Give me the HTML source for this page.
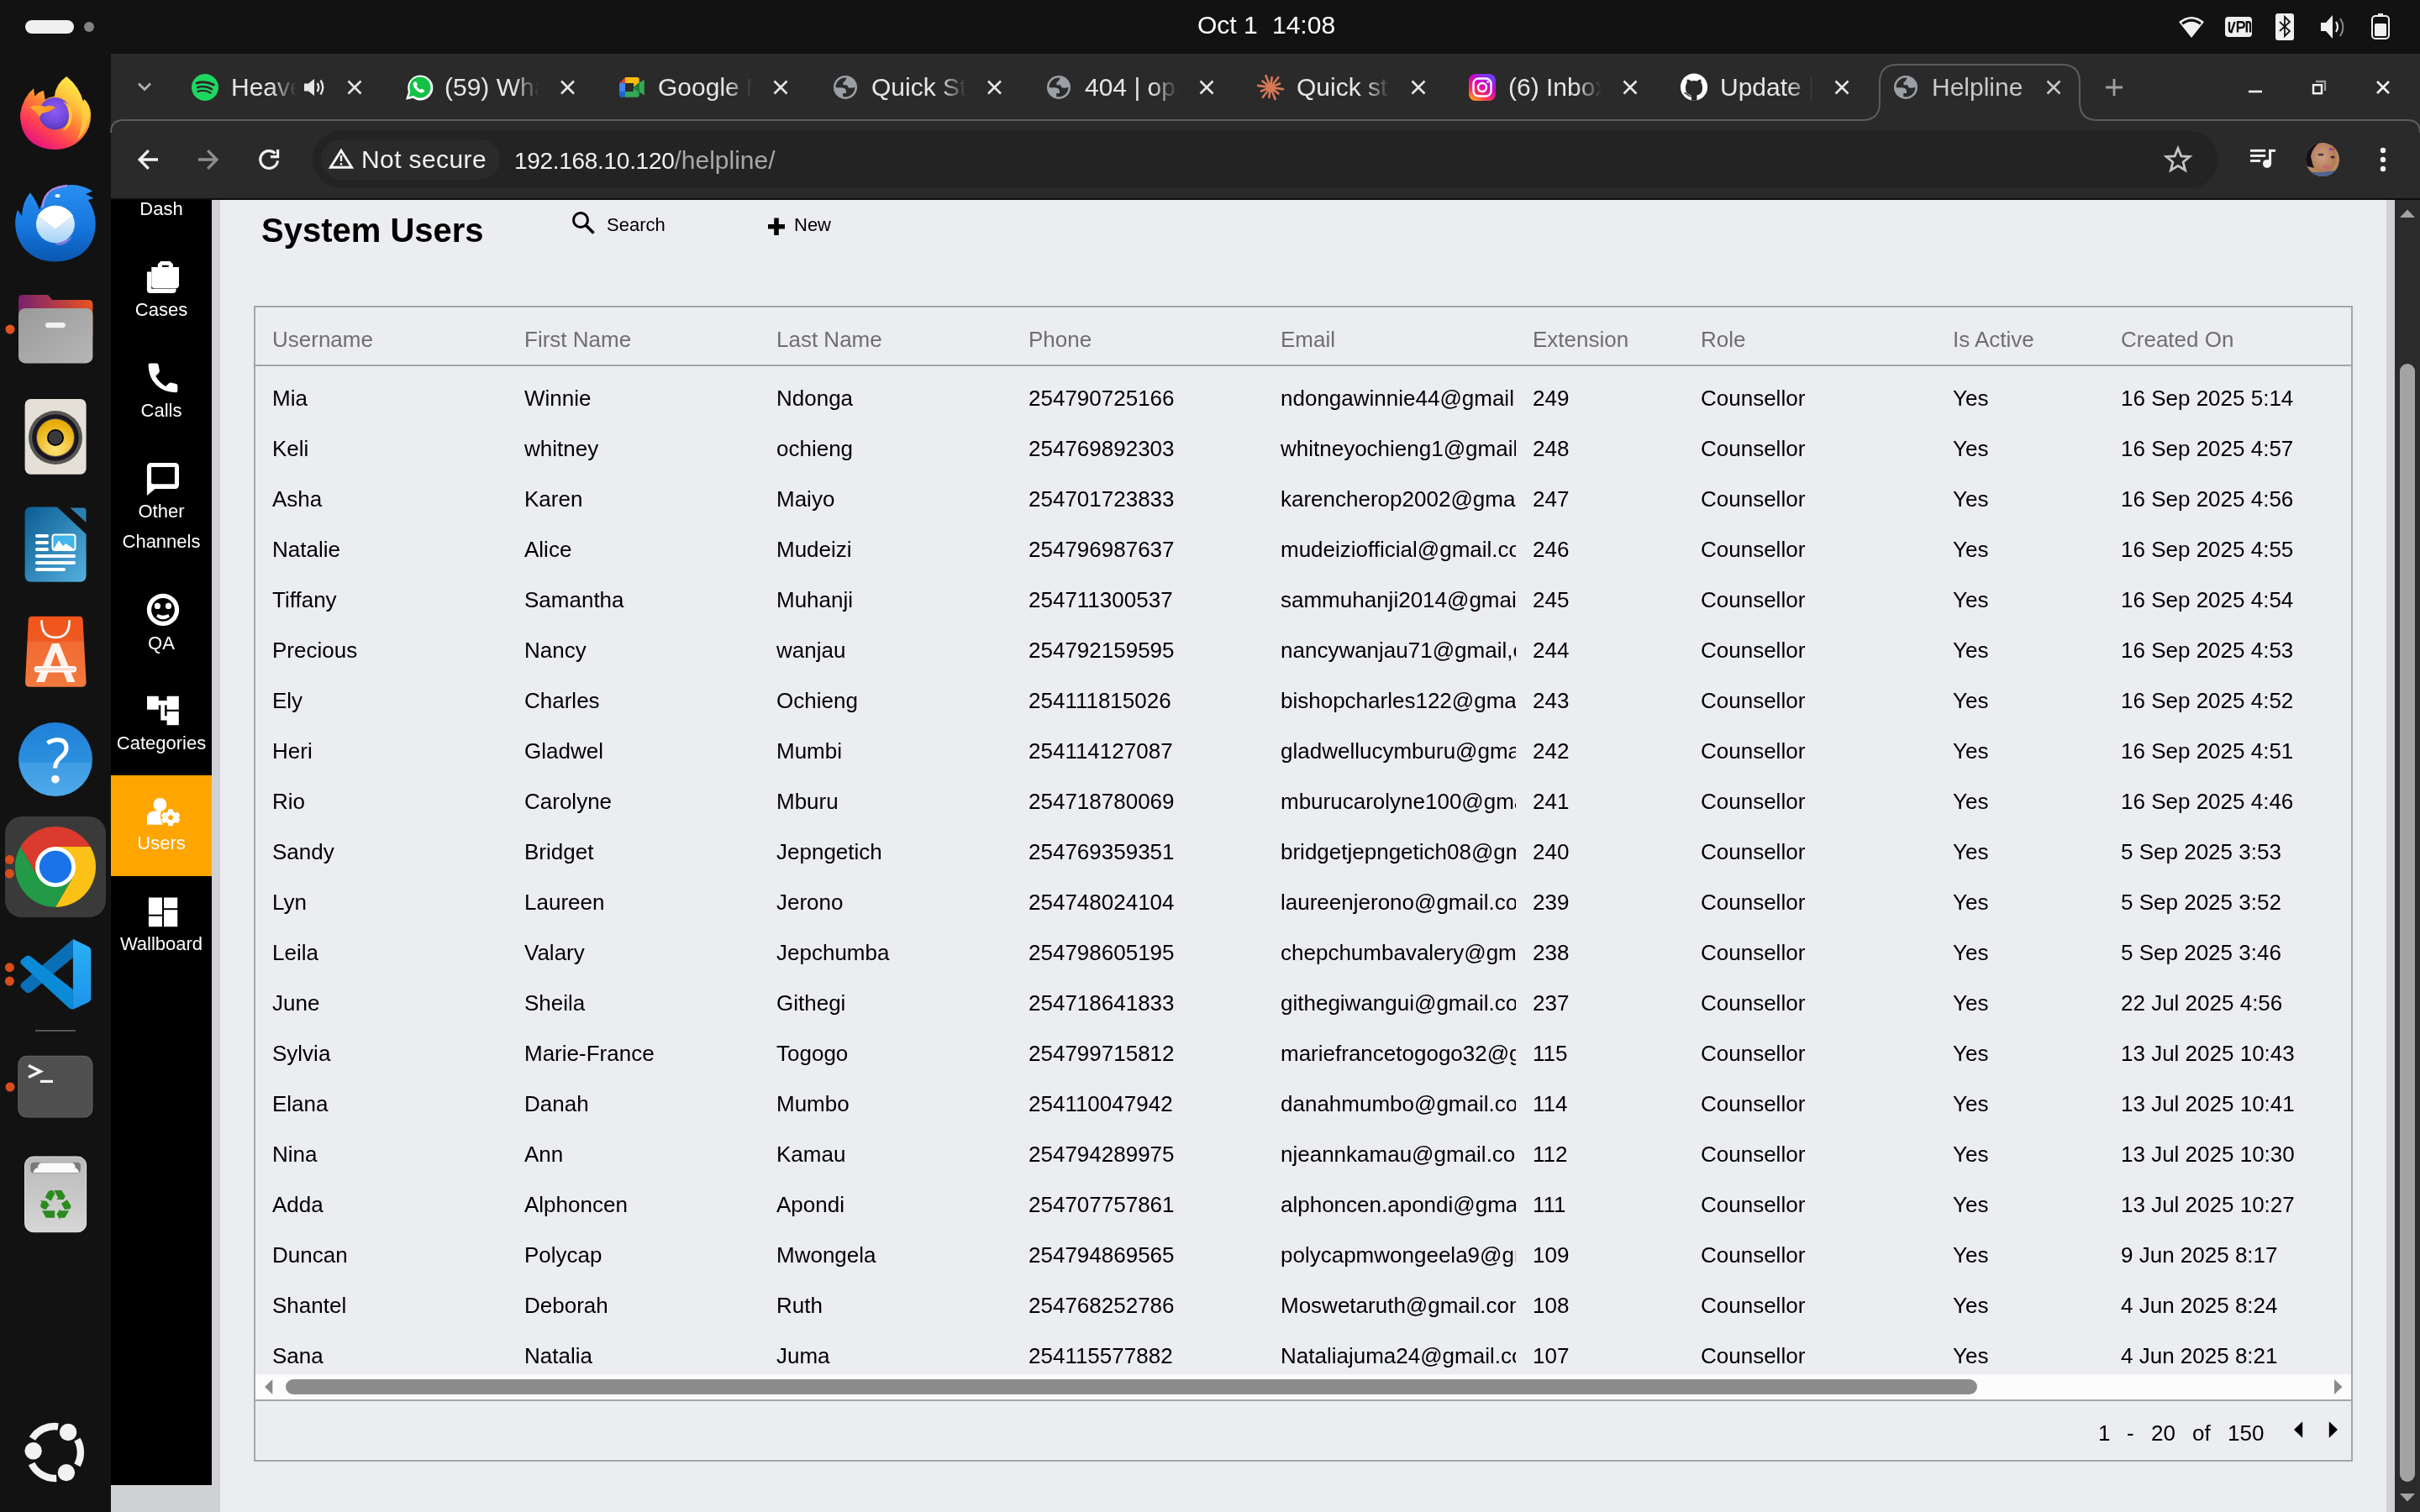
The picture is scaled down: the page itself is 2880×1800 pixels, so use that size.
<!DOCTYPE html>
<html><head><meta charset="utf-8">
<style>
html,body{margin:0;padding:0;width:2880px;height:1800px;overflow:hidden;background:#121212;}
body{font-family:"Liberation Sans",sans-serif;position:relative;}
.a{position:absolute;}
.t{position:absolute;white-space:nowrap;line-height:1;will-change:transform;}
svg{position:absolute;overflow:visible;}
.th{position:absolute;white-space:nowrap;overflow:hidden;font-size:26px;line-height:30px;height:30px;color:#6f6f6f;padding-left:20px;margin-top:23px;will-change:transform;}
.td{position:absolute;white-space:nowrap;overflow:hidden;font-size:26px;line-height:30px;height:30px;color:#000;padding-left:20px;margin-top:23px;will-change:transform;}
.tab{position:absolute;top:86px;font-size:30px;line-height:36px;height:36px;color:#e3e3e3;white-space:nowrap;overflow:hidden;will-change:transform;}
</style></head>
<body>
<!-- ============ TOP BAR ============ -->
<div class="a" style="left:0;top:0;width:2880px;height:64px;background:#121212"></div>
<div class="a" style="left:30px;top:24px;width:58px;height:16px;border-radius:8px;background:#f0f0f0"></div>
<div class="a" style="left:100px;top:26px;width:12px;height:12px;border-radius:6px;background:#828282"></div>
<div class="t" style="left:1425px;top:15px;font-size:30px;color:#fff">Oct 1</div><div class="t" style="left:1514px;top:15px;font-size:30px;color:#fff">14:08</div>
<!-- tray -->
<svg style="left:0;top:0" width="2880" height="64">
  <!-- wifi -->
  <path d="M2593,26 Q2608,14 2623,26 L2608,45 Z" fill="#f0f0f0"/>
  <path d="M2596.3,27 Q2608,17.8 2619.7,27 L2618.2,29.6 Q2608,21.8 2597.8,29.6 Z" fill="#121212"/>
  <!-- vpn -->
  <rect x="2648" y="20" width="32" height="24" rx="4" fill="#f0f0f0"/>
  <path d="M2653,26 V34.5 Q2653,38.2 2655.5,38.2 L2659.5,26 M2663,38.5 V26.2 H2667.5 Q2670.8,26.2 2670.8,29.6 Q2670.8,33 2667.5,33 H2663 M2673.8,38.5 V26.2 H2676 Q2678,26.2 2678,28.6 V38.5" stroke="#121212" stroke-width="2.4" fill="none"/>
  <!-- bluetooth -->
  <rect x="2708" y="16" width="22" height="32" rx="3" fill="#f0f0f0"/>
  <path d="M2713,26 L2725,37 L2719,43 V20 L2725,26 L2713,37" stroke="#121212" stroke-width="1.8" fill="none"/>
  <!-- volume -->
  <path d="M2762,27 H2768 L2776,18 V46 L2768,37 H2762 Z" fill="#f0f0f0"/>
  <path d="M2780,26 Q2784,32 2780,38" stroke="#f0f0f0" stroke-width="2.2" fill="none"/>
  <path d="M2785,22 Q2792,32 2785,43" stroke="#8a8a8a" stroke-width="2" fill="none"/>
  <!-- battery -->
  <rect x="2830" y="16" width="6" height="3" fill="#f0f0f0"/>
  <rect x="2823" y="19" width="20" height="27" rx="4" stroke="#f0f0f0" stroke-width="2" fill="none"/>
  <rect x="2826" y="28" width="14" height="15" rx="1.5" fill="#f0f0f0"/>
</svg>

<!-- ============ DOCK ============ -->
<svg style="left:0;top:0" width="132" height="1800">
<defs>
  <radialGradient id="ffg" cx="0.7" cy="0.2" r="0.9">
    <stop offset="0" stop-color="#fff44f"/><stop offset="0.35" stop-color="#ffbd4f"/><stop offset="0.6" stop-color="#ff6a3a"/><stop offset="0.85" stop-color="#ff3750"/><stop offset="1" stop-color="#e31587"/>
  </radialGradient>
  <radialGradient id="ffp" cx="0.5" cy="0.35" r="0.7">
    <stop offset="0" stop-color="#9059ff"/><stop offset="0.6" stop-color="#6e4fd8"/><stop offset="1" stop-color="#5b3ab8"/>
  </radialGradient>
  <linearGradient id="tbg" x1="0" y1="0" x2="0" y2="1">
    <stop offset="0" stop-color="#1f8ae8"/><stop offset="1" stop-color="#0c5cb8"/>
  </linearGradient>
  <linearGradient id="fold" x1="0" y1="0" x2="1" y2="0">
    <stop offset="0" stop-color="#77216f"/><stop offset="1" stop-color="#e95420"/>
  </linearGradient>
  <linearGradient id="foldg" x1="0" y1="0" x2="1" y2="1">
    <stop offset="0" stop-color="#9a9a9a"/><stop offset="1" stop-color="#b6b6b6"/>
  </linearGradient>
  <radialGradient id="spk" cx="0.5" cy="0.8" r="0.7">
    <stop offset="0" stop-color="#fde47a"/><stop offset="1" stop-color="#e8ad0a"/>
  </radialGradient>
  <linearGradient id="wri" x1="0" y1="0" x2="1" y2="1">
    <stop offset="0" stop-color="#0b5d94"/><stop offset="1" stop-color="#55b0dd"/>
  </linearGradient>
  <linearGradient id="apc" x1="0" y1="0" x2="0" y2="1">
    <stop offset="0" stop-color="#f2541a"/><stop offset="0.35" stop-color="#ee5a22"/><stop offset="0.37" stop-color="#f26b34"/><stop offset="1" stop-color="#f27a3e"/>
  </linearGradient>
  <linearGradient id="hlp" x1="0" y1="0" x2="0" y2="1">
    <stop offset="0" stop-color="#2080d8"/><stop offset="0.54" stop-color="#2b90de"/><stop offset="0.54" stop-color="#3f9be3"/><stop offset="1" stop-color="#4eaae9"/>
  </linearGradient>
  <linearGradient id="trs" x1="0" y1="0" x2="0" y2="1">
    <stop offset="0" stop-color="#b9b9b9"/><stop offset="1" stop-color="#d6d6d6"/>
  </linearGradient>
  <linearGradient id="vsl" x1="0" y1="0" x2="0" y2="1">
    <stop offset="0" stop-color="#2bb0f5"/><stop offset="1" stop-color="#1c94ea"/>
  </linearGradient>
</defs>
<!-- firefox -->
<defs>
  <linearGradient id="ffb" x1="0.85" y1="0.05" x2="0.25" y2="0.95">
    <stop offset="0" stop-color="#fff44f"/><stop offset="0.3" stop-color="#ffc23a"/><stop offset="0.55" stop-color="#ff7a35"/><stop offset="0.78" stop-color="#ff3d55"/><stop offset="1" stop-color="#e5177f"/>
  </linearGradient>
  <radialGradient id="ffp2" cx="0.5" cy="0.4" r="0.65">
    <stop offset="0" stop-color="#8f5cf7"/><stop offset="0.6" stop-color="#7048dc"/><stop offset="1" stop-color="#5636b4"/>
  </radialGradient>
  <linearGradient id="ffh" x1="0" y1="0" x2="1" y2="0.3">
    <stop offset="0" stop-color="#ffb52e"/><stop offset="1" stop-color="#ff9124"/>
  </linearGradient>
</defs>
<path d="M40,105.2 Q27,116 24,136 Q24,160 40,171 Q52,178.5 66.3,178 Q86,177.5 98,164 Q108.5,152 108.1,136 Q107.5,125 100.4,118 L99,121 Q95,104 79.3,91 Q66,100 64.8,114.8 Q59,115.5 53.7,118.5 L51.9,107.8 Q45,110 41.5,114.8 Z" fill="url(#ffb)"/>
<path d="M96,116 Q104,124 106,138 Q104,156 92,166 Q99,150 97,132 Z" fill="#ffd340" opacity="0.7"/>
<circle cx="65.5" cy="135.2" r="19.2" fill="url(#ffp2)"/>
<path d="M75,121 Q86,124 86,138 Q85,152 74,156.5 Q83,146 82,136 Q81,126 75,121 Z" fill="#ffc33a"/>
<path d="M35.2,127.4 Q44,124 54,127 Q60,124 66,128.1 Q60,133 53,134 Q48,135 47.5,140 Q44,133 35.2,127.4 Z" fill="url(#ffh)"/>
<!-- thunderbird -->
<defs>
  <linearGradient id="tb2" x1="0" y1="0" x2="0" y2="1">
    <stop offset="0" stop-color="#2a8ef0"/><stop offset="0.55" stop-color="#1677de"/><stop offset="1" stop-color="#0b56b0"/>
  </linearGradient>
  <linearGradient id="env" x1="0" y1="0" x2="0" y2="1">
    <stop offset="0" stop-color="#ffffff"/><stop offset="1" stop-color="#a6d2f7"/>
  </linearGradient>
</defs>
<path d="M35.9,229.3 Q44,240 47,250 Q52,232 68,224 Q80,218.5 92,220.5 Q104,223 110,227.8 L102,231 L111.5,236 L105,238 Q113.7,252 113.7,266 Q113.7,290 96,303 Q82,311.5 66,311.5 Q42,311.5 28,295 Q18,282 18.1,265 Q18.5,255 21.1,250 L26,257 Q27,240 35.9,229.3 Z" fill="url(#tb2)"/>
<path d="M50.4,247 Q52,232 62,226 Q70,222 80,221" stroke="#a78be8" stroke-width="2.6" fill="none"/>
<path d="M60,283 Q72,290 86,282 Q80,292 68,292 Z" fill="#7c7ce0"/>
<ellipse cx="65.9" cy="267" rx="23" ry="22.2" fill="url(#env)"/>
<path d="M44.8,257 L65.9,273 L87,257 Q80,245.5 65.9,244.8 Q52,245.5 44.8,257 Z" fill="#ffffff"/>
<path d="M44.8,257 L65.9,273 L87,257" stroke="#c6def4" stroke-width="1" fill="none"/>
<ellipse cx="68.5" cy="233" rx="3" ry="2" fill="#fff"/>
<!-- files -->
<path d="M22,356 Q22,351 27,351 H57 L62,357 H105 Q110.4,357 110.4,362 V400 H22 Z" fill="url(#fold)"/>
<rect x="22" y="367" width="88.4" height="65.4" rx="8" fill="url(#foldg)"/>
<rect x="54" y="384" width="23.8" height="6.2" rx="3.1" fill="#f2f2f2"/>
<circle cx="12" cy="392" r="5.5" fill="#e4531e"/>
<!-- rhythmbox -->
<rect x="29.6" y="475" width="73" height="89.7" rx="7" fill="#e4e0d6"/>
<circle cx="66" cy="521" r="32" fill="#555"/>
<circle cx="66" cy="521" r="27.8" fill="#1b1620"/>
<circle cx="66" cy="521" r="23" fill="#4a4a50"/>
<circle cx="66" cy="521" r="22" fill="url(#spk)"/>
<circle cx="66" cy="521" r="10" fill="#000"/>
<circle cx="66" cy="521" r="8.3" fill="#3a3a3a"/>
<!-- writer -->
<path d="M37,603.5 H68 L102.6,636 V685 Q102.6,692.7 95,692.7 H37 Q29.6,692.7 29.6,685 V611 Q29.6,603.5 37,603.5 Z" fill="url(#wri)"/>
<path d="M83.5,604.5 H99 Q102.5,604.5 102.5,608 V622 Z" fill="#2b7fb0"/>
<rect x="42" y="636" width="16" height="4" rx="2" fill="#fff"/>
<rect x="42" y="644" width="16" height="4" rx="2" fill="#fff"/>
<rect x="42" y="652" width="16" height="4" rx="2" fill="#fff"/>
<rect x="42" y="660" width="48" height="4" rx="2" fill="#fff"/>
<rect x="42" y="668" width="48" height="4" rx="2" fill="#fff"/>
<rect x="42" y="676" width="36" height="4" rx="2" fill="#fff"/>
<rect x="62.5" y="636.5" width="27" height="18.5" rx="3" fill="#43b4ec" stroke="#fff" stroke-width="2"/>
<path d="M63.5,654 L70,643.5 L75,650 L78.5,647 L88.5,654 Z" fill="#fff"/>
<!-- app center -->
<path d="M38,733.7 H94 Q98.5,733.7 98.6,738 L102.6,812 Q102.6,817.8 97,817.8 H35 Q30,817.8 30,812 L33.8,738 Q34,733.7 38,733.7 Z" fill="url(#apc)"/>
<path d="M49.6,739.5 Q49.6,758.9 66,758.9 Q82.6,758.9 82.6,739.5" stroke="#f2f2f2" stroke-width="2.8" fill="none" stroke-linecap="round"/>
<path d="M62,766 H70.5 L89.3,812 H80 L66.3,776.3 L53,812 H43 Z" fill="#fdf3ec"/>
<rect x="40.7" y="793" width="50.4" height="7.4" rx="3.7" fill="#fff"/>
<rect x="43" y="795.2" width="46" height="3" rx="1.5" fill="#fbd6c8"/>
<!-- help -->
<circle cx="66" cy="904" r="44" fill="url(#hlp)"/>
<path d="M56.5,884.8 Q62,880.7 68.5,880.7 Q79,880.9 79,890.5 Q79,896 73,901 Q65.6,907 65.6,914.4" stroke="#fff" stroke-width="5.1" fill="none"/>
<circle cx="65.9" cy="927.7" r="4.8" fill="#fff"/>
<!-- chrome -->
<rect x="6" y="972" width="120" height="120" rx="20" fill="#3a3a3a"/>
<path d="M66,1008 L107.6,1008 A48,48 0 0 0 24.4,1008 L45.2,1044 L66,1032 Z" fill="#db3a2e"/>
<path d="M107.6,1008 A48,48 0 0 1 66,1080 L86.8,1044 L66,1032 L66,1008 Z" fill="#fbc116"/>
<path d="M66,1080 A48,48 0 0 1 24.4,1008 L45.2,1044 L66,1032 L86.8,1044 Z" fill="#239a47"/>
<circle cx="66" cy="1032" r="24" fill="#fff"/>
<circle cx="66" cy="1032" r="19.2" fill="#1a73e8"/>
<circle cx="11.4" cy="1023.3" r="5.5" fill="#d94d1a"/>
<circle cx="11.4" cy="1040" r="5.5" fill="#d94d1a"/>
<!-- vscode -->
<path d="M85,1119 L108.3,1130 V1190 L85,1201.7 L30,1160 L25,1163.5 Q24,1164.5 25,1166 L30,1171 Z" fill="#0b76c4" opacity="0"/>
<path d="M86.9,1118 L86.9,1140 L37,1181 Q33,1183.5 30,1180.5 L25.5,1176 Q23,1173 26,1170 Z" fill="#0a6fb6"/>
<path d="M26,1138 Q23,1141 25.5,1144 L86.9,1190 V1201.7 L83,1200 Q82,1199 80,1197.5 L30,1144 Z" fill="#0d86d4" opacity="0"/>
<path d="M30,1139 Q33,1136 37,1139 L86.9,1178 V1201.5 Q84,1202 81,1199 L25.5,1148 Q23,1145 26,1142 Z" fill="#0b8ad8"/>
<path d="M86.9,1117.9 L104.5,1126.5 Q108.3,1128.5 108.3,1132 V1188 Q108.3,1191.5 104.5,1193.5 L86.9,1201.7 Z" fill="url(#vsl)"/>
<circle cx="11.4" cy="1151.7" r="5.5" fill="#d94d1a"/>
<circle cx="11.4" cy="1168.1" r="5.5" fill="#d94d1a"/>
<!-- separator -->
<rect x="42" y="1226" width="48" height="2" fill="#555"/>
<!-- terminal -->
<rect x="21.9" y="1257.4" width="88" height="72.6" rx="10" fill="#4f4f4f" stroke="#606060" stroke-width="1.2"/>
<path d="M34,1268.5 L48,1275.5 L34,1282.5" stroke="#f5f5f5" stroke-width="3.6" fill="none"/>
<rect x="47.8" y="1285.8" width="15.2" height="3.2" fill="#f5f5f5"/>
<circle cx="12" cy="1294" r="5.5" fill="#d94d1a"/>
<!-- trash -->
<rect x="29.6" y="1377" width="73" height="89.7" rx="10" fill="url(#trs)" stroke="#e8e8e8" stroke-width="1"/>
<rect x="36.3" y="1383.8" width="59.6" height="12.6" rx="4" fill="#7a7a7a"/>
<path d="M39.5,1396 Q41,1390 46,1390 H88 Q93,1390.5 94,1396 Z" fill="#fafafa"/><path d="M45,1390 Q45.5,1384.5 50,1384.5 H86 Q89,1385 89.5,1390" stroke="#d0d0d0" stroke-width="1" fill="#fafafa"/>
<g fill="#2b8a1e">
  <path d="M53.7,1425.3 L57.4,1418.6 Q59,1417 61.9,1417.1 Q64.3,1417.6 65.2,1421.2 L60.7,1429.7 Z"/>
  <path d="M64.4,1417.1 H73.3 L77.4,1423.8 L79.3,1421 L75.6,1427.9 H67.4 L69.1,1426.1 Z"/>
  <path d="M73,1432.7 L80,1428.2 L84.4,1435.6 Q84.6,1438.5 83,1439.3 L77,1440.1 Z"/>
  <path d="M82.2,1441.2 L77,1449.7 H71.5 V1452.3 L67.4,1445.6 L71.5,1439 V1441.2 Z"/>
  <path d="M50,1441.2 H65.2 V1449.7 H54.8 Z"/>
  <path d="M47.8,1429.3 L55.2,1429.7 L60,1436.7 L58.1,1434.9 L54.8,1440.1 L51.5,1439.3 Q48,1437.5 48.1,1435.6 Q48.3,1433 49.8,1431.2 Z"/>
</g>
<!-- ubuntu -->
<path d="M50,1697 A35,35 0 0 0 31,1720" stroke="#f2f2f2" stroke-width="8.5" fill="none" opacity="0"/>
<g stroke="#f2f2f2" stroke-width="8.4" fill="none">
  <path d="M69.1,1698.3 A31,31 0 0 0 38.5,1712.6"/>
  <path d="M37.6,1742.5 A31,31 0 0 0 67.2,1759.9"/>
  <path d="M91.9,1713.8 A31,31 0 0 1 91.9,1744.2"/>
</g>
<circle cx="81.1" cy="1705" r="10.2" fill="#f2f2f2"/>
<circle cx="39.6" cy="1727.2" r="10.2" fill="#f2f2f2"/>
<circle cx="78.9" cy="1753.1" r="10.2" fill="#f2f2f2"/>
</svg>


<!-- ============ CHROME FRAME ============ -->
<div class="a" style="left:132px;top:64px;width:2748px;height:174px;background:#2a2a2a"></div>
<svg style="left:0;top:0" width="2880" height="240">
  <path d="M132,158 Q132,143 147,143 H2216 Q2237,143 2237,122 V98 Q2237,77 2258,77 H2454 Q2475,77 2475,98 V122 Q2475,143 2496,143 H2865 Q2880,143 2880,158" stroke="#5c5c5c" stroke-width="2" fill="none"/>
</svg>
<div class="tab" style="left:275px;width:78px;color:#e6e6e6;-webkit-mask-image:linear-gradient(to right,#000 48px,transparent 78px);">Heaven Falls</div>
<div class="tab" style="left:529px;width:112.5px;color:#e6e6e6;-webkit-mask-image:linear-gradient(to right,#000 82.5px,transparent 112.5px);">(59) WhatsApp</div>
<div class="tab" style="left:783px;width:112px;color:#e6e6e6;-webkit-mask-image:linear-gradient(to right,#000 82px,transparent 112px);">Google Meet</div>
<div class="tab" style="left:1037px;width:112.5px;color:#e6e6e6;-webkit-mask-image:linear-gradient(to right,#000 82.5px,transparent 112.5px);">Quick Start</div>
<div class="tab" style="left:1291px;width:111px;color:#e6e6e6;-webkit-mask-image:linear-gradient(to right,#000 81px,transparent 111px);">404 | open</div>
<div class="tab" style="left:1543px;width:111px;color:#e6e6e6;-webkit-mask-image:linear-gradient(to right,#000 81px,transparent 111px);">Quick start</div>
<div class="tab" style="left:1795px;width:111px;color:#e6e6e6;-webkit-mask-image:linear-gradient(to right,#000 81px,transparent 111px);">(6) Inbox</div>
<div class="tab" style="left:2047px;width:111px;color:#e6e6e6;-webkit-mask-image:linear-gradient(to right,#000 81px,transparent 111px);">Update |</div>
<div class="tab" style="left:2299px;width:130px;color:#c8c8c8;">Helpline</div>
<svg style="left:0;top:0" width="2880" height="150">
<path d="M165,99.5 L172,106.5 L179,99.5" stroke="#b0b0b0" stroke-width="2.8" fill="none"/>
<path d="M414.5,96.5 L429.5,111.5 M429.5,96.5 L414.5,111.5" stroke="#e6e6e6" stroke-width="2.6"/>
<path d="M668.0,96.5 L683.0,111.5 M683.0,96.5 L668.0,111.5" stroke="#e6e6e6" stroke-width="2.6"/>
<path d="M921.5,96.5 L936.5,111.5 M936.5,96.5 L921.5,111.5" stroke="#e6e6e6" stroke-width="2.6"/>
<path d="M1176.0,96.5 L1191.0,111.5 M1191.0,96.5 L1176.0,111.5" stroke="#e6e6e6" stroke-width="2.6"/>
<path d="M1428.5,96.5 L1443.5,111.5 M1443.5,96.5 L1428.5,111.5" stroke="#e6e6e6" stroke-width="2.6"/>
<path d="M1680.5,96.5 L1695.5,111.5 M1695.5,96.5 L1680.5,111.5" stroke="#e6e6e6" stroke-width="2.6"/>
<path d="M1932.5,96.5 L1947.5,111.5 M1947.5,96.5 L1932.5,111.5" stroke="#e6e6e6" stroke-width="2.6"/>
<path d="M2184.5,96.5 L2199.5,111.5 M2199.5,96.5 L2184.5,111.5" stroke="#e6e6e6" stroke-width="2.6"/>
<path d="M2436.5,96.5 L2451.5,111.5 M2451.5,96.5 L2436.5,111.5" stroke="#c8c8c8" stroke-width="2.6"/>
<circle cx="244" cy="104" r="16" fill="#1ed760"/>
<path d="M234.3,98.9 Q244,95.6 254.2,100.9" stroke="#2a2a2a" stroke-width="3" fill="none" stroke-linecap="round"/><path d="M235.4,104 Q244,101.2 252,106.1" stroke="#2a2a2a" stroke-width="2.7" fill="none" stroke-linecap="round"/><path d="M235.6,108.9 Q243.5,106.3 250.5,110.5" stroke="#2a2a2a" stroke-width="2.4" fill="none" stroke-linecap="round"/>
<path d="M362,99.5 H367 L374,94 V114 L367,108.5 H362 Z" fill="#e6e6e6"/>
<path d="M377.5,99 Q381,104 377.5,109" stroke="#e6e6e6" stroke-width="2.4" fill="none"/>
<path d="M381.5,95.5 Q387,104 381.5,112.5" stroke="#e6e6e6" stroke-width="2.4" fill="none"/>
<path d="M482.9,118.7 L486,109.5 A15.1,15.1 0 1 1 491.5,116.8 Z" fill="#fff"/>
<path d="M486.3,115.2 L488.4,109.2 A12.6,12.6 0 1 1 492.2,114 Z" fill="#13c145"/>
<path d="M493.5,97.3 Q491.2,98.6 491.9,102 Q493.5,107 498.5,109.5 Q502.5,111.2 504.5,109.6 Q505.6,108.4 505,107.4 L501.8,105.6 L500.3,106.8 Q497.2,105.5 495.6,102.3 L496.8,100.9 L495.5,97.6 Q494.8,97 493.5,97.3 Z" fill="#fff"/>
<path d="M737.4,98.8 L744,92.2 V98.8 Z" fill="#ea4335"/>
<path d="M744,91.9 H758.5 Q760.7,91.9 760.7,94.1 V98.3 L754.1,103.8 V99.1 H744 Z" fill="#fbbc04"/>
<path d="M737.1,98.8 H744 V108.9 H737.1 Z" fill="#4285f4"/>
<path d="M737.1,108.9 H744 V115.7 H739.5 Q737.1,115.7 737.1,113.3 Z" fill="#1967d2"/>
<path d="M744,108.9 H753.8 V104.3 L760.7,109.4 V113.5 Q760.7,115.7 758.5,115.7 H744 Z" fill="#34a853"/>
<path d="M753.8,103.9 L760.7,98.3 V109.4 Z" fill="#188038"/>
<path d="M760.7,98.3 L766.8,95.1 V113.6 L760.7,109.4 Z" fill="#34a853"/>
<circle cx="1006" cy="103.9" r="14" fill="#9aa0a6"/>
<circle cx="1006" cy="103.9" r="11.4" fill="#2a2a2a"/>
<path d="M1018.2,103.5 A12.2,12.2 0 0 0 1008.2,91.9 L1005.1,97.2 L1003.5,97.8 V101.2 H1008.2 Q1009,103.5 1009.4,104.1 Q1011.8,105.6 1018.2,103.5 Z" fill="#9aa0a6"/>
<path d="M993.8,104.1 A12.2,12.2 0 0 0 1003.2,115.8 V111 H1007 V108.6 Q1007,106.2 1004.8,105 Q1003.5,104.3 1000,104.2 H993.8 Z" fill="#9aa0a6"/>
<circle cx="1260" cy="103.9" r="14" fill="#9aa0a6"/>
<circle cx="1260" cy="103.9" r="11.4" fill="#2a2a2a"/>
<path d="M1272.2,103.5 A12.2,12.2 0 0 0 1262.2,91.9 L1259.1,97.2 L1257.5,97.8 V101.2 H1262.2 Q1263,103.5 1263.4,104.1 Q1265.8,105.6 1272.2,103.5 Z" fill="#9aa0a6"/>
<path d="M1247.8,104.1 A12.2,12.2 0 0 0 1257.2,115.8 V111 H1261 V108.6 Q1261,106.2 1258.8,105 Q1257.5,104.3 1254,104.2 H1247.8 Z" fill="#9aa0a6"/>
<circle cx="2268" cy="103.9" r="14" fill="#9aa0a6"/>
<circle cx="2268" cy="103.9" r="11.4" fill="#2a2a2a"/>
<path d="M2280.2,103.5 A12.2,12.2 0 0 0 2270.2,91.9 L2267.1,97.2 L2265.5,97.8 V101.2 H2270.2 Q2271,103.5 2271.4,104.1 Q2273.8,105.6 2280.2,103.5 Z" fill="#9aa0a6"/>
<path d="M2255.8,104.1 A12.2,12.2 0 0 0 2265.2,115.8 V111 H2269 V108.6 Q2269,106.2 2266.8,105 Q2265.5,104.3 2262,104.2 H2255.8 Z" fill="#9aa0a6"/>
<path d="M1512,104 L1526.9,106.1 M1512,104 L1521.5,111.4 M1512,104 L1517.6,117.9 M1512,104 L1510.3,115.9 M1512,104 L1502.8,115.8 M1512,104 L1500.9,108.5 M1512,104 L1497.1,101.9 M1512,104 L1502.5,96.6 M1512,104 L1506.4,90.1 M1512,104 L1513.7,92.1 M1512,104 L1521.2,92.2 M1512,104 L1523.1,99.5" stroke="#d97757" stroke-width="2.6" stroke-linecap="round"/>
<defs><linearGradient id="ig" x1="0" y1="1" x2="0.6" y2="0"><stop offset="0" stop-color="#fdc300"/><stop offset="0.35" stop-color="#f9315e"/><stop offset="0.7" stop-color="#d300c5"/><stop offset="1" stop-color="#7638fa"/></linearGradient></defs>
<rect x="1748" y="88" width="32" height="32" rx="8" fill="url(#ig)"/>
<rect x="1753.5" y="93.5" width="21" height="21" rx="6" stroke="#fff" stroke-width="2.4" fill="none"/>
<circle cx="1764" cy="104" r="5" stroke="#fff" stroke-width="2.4" fill="none"/>
<circle cx="1770.5" cy="97.5" r="1.4" fill="#fff"/>
<circle cx="2016" cy="103.6" r="16.1" fill="#fff"/>
<path d="M2012.9,119.8 V113.5 Q2008,112.5 2006.6,109 Q2005.6,106.5 2006,103 Q2006.3,100 2007.6,98.5 Q2007.2,96 2008,94.6 Q2010.5,94.8 2012.5,96.4 Q2016,95.6 2019.6,96.4 Q2021.6,94.8 2024.2,94.6 Q2024.9,96 2024.5,98.5 Q2025.9,100 2026,103 Q2026.3,106.5 2025.4,109 Q2024,112.5 2019.4,113.5 V119.8 Z" fill="#2a2a2a"/>
<path d="M2004.5,110.2 Q2006.5,110.6 2008,112.6 Q2009.5,114.6 2012.9,114.4" stroke="#2a2a2a" stroke-width="1.5" fill="none"/>
<path d="M2516,94 V114 M2506,104 H2526" stroke="#a0a0a0" stroke-width="2.8"/>
</svg>
<!-- toolbar -->
<svg style="left:0;top:0" width="2880" height="240">
  <!-- back -->
  <path d="M188,190 H167.5 M176.8,179.2 L166.1,190 L176.8,200.8" stroke="#f2f2f2" stroke-width="3.3" fill="none"/>
  <!-- forward -->
  <path d="M236,190 H256.5 M247.2,179.2 L257.9,190 L247.2,200.8" stroke="#8e8e8e" stroke-width="3.3" fill="none"/>
  <!-- reload -->
  <path d="M327.5,182.6 A10.4,10.4 0 1 0 330.5,191.4" stroke="#f2f2f2" stroke-width="3.2" fill="none"/>
  <path d="M322,186.6 H330.6 V178" stroke="#f2f2f2" stroke-width="3.2" fill="none"/>
  <!-- window controls -->
  <rect x="2676" y="107.7" width="16" height="2.6" fill="#f2f2f2"/>
  <path d="M2756,97 H2767 V108" stroke="#9a9a9a" stroke-width="2.3" fill="none"/>
  <rect x="2753" y="101.2" width="10" height="10" stroke="#f2f2f2" stroke-width="2.4" fill="none"/>
  <path d="M2829,97 L2843,111 M2843,97 L2829,111" stroke="#f2f2f2" stroke-width="2.6"/>
</svg>
<div class="a" style="left:372px;top:156px;width:2268px;height:68px;border-radius:34px;background:#232323"></div>
<div class="a" style="left:382px;top:166px;width:213px;height:48px;border-radius:24px;background:#2a2a2a"></div>
<svg style="left:0;top:0" width="2880" height="240">
  <path d="M406,179.2 L418.6,199.3 H393.4 Z" stroke="#f8f8f8" stroke-width="2.9" fill="none" stroke-linejoin="miter"/>
  <rect x="404.8" y="185" width="2.4" height="7" fill="#f2f2f2"/>
  <rect x="404.8" y="194" width="2.4" height="2.6" fill="#f2f2f2"/>
  <!-- star -->
  <path d="M2592.0,176.4 L2595.8,185.8 L2605.9,186.5 L2598.1,193.0 L2600.6,202.8 L2592.0,197.4 L2583.4,202.8 L2585.9,193.0 L2578.1,186.5 L2588.2,185.8 Z" stroke="#c4c4c4" stroke-width="2.8" fill="none" stroke-linejoin="miter"/>
  <!-- media -->
  <rect x="2678" y="177.9" width="18.2" height="2.9" fill="#f2f2f2"/>
  <rect x="2678" y="184" width="18.2" height="2.9" fill="#f2f2f2"/>
  <rect x="2678" y="190" width="12.1" height="2.9" fill="#f2f2f2"/>
  <rect x="2700" y="177.9" width="3.1" height="17.5" fill="#f2f2f2"/>
  <rect x="2700" y="177.9" width="8.1" height="2.9" fill="#f2f2f2"/>
  <circle cx="2698" cy="194.9" r="5" fill="#f2f2f2"/>
  <!-- avatar -->
  <defs>
    <clipPath id="avc"><circle cx="2764" cy="190" r="20"/></clipPath>
    <radialGradient id="avf" cx="0.45" cy="0.45" r="0.6">
      <stop offset="0" stop-color="#cf9e86"/><stop offset="0.7" stop-color="#b8825e"/><stop offset="1" stop-color="#a8744e"/>
    </radialGradient>
  </defs>
  <g clip-path="url(#avc)">
    <rect x="2740" y="166" width="48" height="48" fill="#b98a62"/>
    <ellipse cx="2765" cy="188" rx="15" ry="18" fill="url(#avf)"/>
    <path d="M2742,185 Q2746,172 2760,170 Q2752,176 2750,186 Q2752,196 2754,200 L2746,198 Q2742,192 2742,185 Z" fill="#141018"/>
    <ellipse cx="2762" cy="184" rx="3.5" ry="1.5" fill="#4a3a40"/>
    <ellipse cx="2776" cy="187" rx="2.5" ry="1.5" fill="#3a2a30"/>
    <ellipse cx="2769" cy="199" rx="4.5" ry="2.5" fill="#c86a72"/>
    <path d="M2744,203 Q2756,206 2764,205 Q2774,204 2784,202 V214 H2744 Z" fill="#4d6494"/>
  </g>
  <circle cx="2773.3" cy="177.6" r="1.3" fill="#2050f0"/><circle cx="2776.8" cy="177.6" r="1.3" fill="#f01818"/>
  <!-- menu -->
  <circle cx="2836" cy="179" r="3.2" fill="#f2f2f2"/>
  <circle cx="2836" cy="190" r="3.2" fill="#f2f2f2"/>
  <circle cx="2836" cy="201" r="3.2" fill="#f2f2f2"/>
</svg>
<div class="t" style="left:430px;top:174.5px;font-size:30px;color:#f2f2f2;letter-spacing:0.4px">Not secure</div>
<div class="t" style="left:612px;top:175.8px;font-size:28px;color:#f2f2f2;letter-spacing:-0.3px">192.168.10.120<span style="color:#a8a8a8;font-size:30px;letter-spacing:0">/helpline/</span></div>
<div class="a" style="left:132px;top:236px;width:2748px;height:2px;background:#0e0e0e"></div>

<!-- ============ PAGE ============ -->
<div class="a" style="left:132px;top:238px;width:2748px;height:1562px;background:#ecedf1;overflow:hidden">
</div>
<!-- sidebar -->
<div class="a" style="left:132px;top:238px;width:120px;height:1530px;background:#000"></div>
<div class="a" style="left:132px;top:1768px;width:130px;height:32px;background:#d0d1d5"></div>
<div class="a" style="left:252px;top:238px;width:10px;height:1562px;background:#d0d1d5"></div>
<div class="a" style="left:132px;top:923px;width:120px;height:120px;background:#ffa500"></div>
<div class="a" style="left:2840px;top:238px;width:10px;height:1562px;background:#d0d1d5"></div>
<!-- page scrollbar -->
<div class="a" style="left:2850px;top:238px;width:30px;height:1562px;background:#2b2b2b"></div>
<svg style="left:0;top:0" width="2880" height="1800">
  <path d="M2856,259 L2865,249.5 L2874,259 Z" fill="#a3a3a3"/>
  <rect x="2856" y="433" width="18" height="1331" rx="9" fill="#a3a3a3"/>
  <path d="M2856,1778 L2865,1787.5 L2874,1778 Z" fill="#a3a3a3"/>
</svg>
<!-- sidebar labels -->
<div class="t" style="left:132px;width:120px;text-align:center;top:238.4px;font-size:22px;color:#fff">Dash</div>
<div class="t" style="left:132px;width:120px;text-align:center;top:357.7px;font-size:22px;color:#fff">Cases</div>
<div class="t" style="left:132px;width:120px;text-align:center;top:477.6px;font-size:22px;color:#fff">Calls</div>
<div class="t" style="left:132px;width:120px;text-align:center;top:598.4px;font-size:22px;color:#fff">Other</div>
<div class="t" style="left:132px;width:120px;text-align:center;top:634.4px;font-size:22px;color:#fff">Channels</div>
<div class="t" style="left:132px;width:120px;text-align:center;top:755.4px;font-size:22px;color:#fff">QA</div>
<div class="t" style="left:132px;width:120px;text-align:center;top:874.4px;font-size:22px;color:#fff">Categories</div>
<div class="t" style="left:132px;width:120px;text-align:center;top:993.4px;font-size:22px;color:#fff">Users</div>
<div class="t" style="left:132px;width:120px;text-align:center;top:1113.4px;font-size:22px;color:#fff">Wallboard</div>
<svg style="left:0;top:0" width="2880" height="1800">
  <!-- cases -->
  <path d="M187.8,317.9 V314.5 L191.4,310.9 H202.3 L205.9,314.5 V317.9 H213 V339.3 Q213,343.3 209,343.3 H184.3 Q180.3,343.3 180.3,339.3 V317.9 Z M193,315.8 V318 H200.7 V315.8 Z" fill="#fff" fill-rule="evenodd"/>
  <path d="M174.9,323.4 H180.3 V343.7 H209.6 V345 Q209.6,349 205.6,349 H178.9 Q174.9,349 174.9,345 Z" fill="#fff"/>
  <!-- calls -->
  <path d="M178.5,432.4 H186.3 Q188.3,432.4 188.6,434.4 L189.8,441.2 Q190,443 188.8,444.2 L185.2,447.8 Q189.8,455.8 197.2,460 L200.8,456.4 Q202,455.4 203.6,455.6 L209.6,456.9 Q211.3,457.3 211.3,459.1 V465.2 Q211.3,467.2 209.3,467.2 Q195,467.2 185.8,458 Q176.6,448.6 176.6,434.4 Q176.6,432.4 178.5,432.4 Z" fill="#fff"/>
  <!-- other channels -->
  <path d="M179.9,550.9 H208 Q213,550.9 213,555.9 V577 Q213,582 208,582 H184.5 L174.9,590 V555.9 Q174.9,550.9 179.9,550.9 Z M180.1,556.1 V575.5 L182.4,576.3 H207.9 V556.1 Z" fill="#fff" fill-rule="evenodd"/>
  <!-- QA -->
  <circle cx="194" cy="725.9" r="16.5" stroke="#fff" stroke-width="5.3" fill="none"/>
  <circle cx="187.4" cy="721.4" r="3.6" fill="#fff"/>
  <circle cx="200.5" cy="721.4" r="3.6" fill="#fff"/>
  <path d="M187.6,731 Q194,734.5 200.4,731 L201.8,734.6 Q194,740 186.2,734.6 Z" fill="#fff"/>
  <!-- categories -->
  <path d="M175,828.8 H188.75 V834 H198.6 V828.8 H212.8 V844.7 H198.6 V839.5 H196 V852.2 H198.6 V846.9 H212.8 V863.2 H198.6 V857.6 H191.3 V839.5 H188.75 V844.7 H175 Z" fill="#fff"/>
  <!-- users -->
  <circle cx="190.4" cy="957.9" r="7.9" fill="#fff"/>
  <path d="M174.9,981.7 V973 Q174.9,967 183,965.5 Q187,964.9 192,965.5 Q189,973 194,981.7 Z" fill="#fff"/>
  <g transform="translate(203.1,973.3)">
    <path d="M-2.6,-10 H2.6 L3.2,-7 L5.8,-5.6 L8.7,-6.6 L11.3,-2.1 L9,0 L9,0 L11.3,2.1 L8.7,6.6 L5.8,5.6 L3.2,7 L2.6,10 H-2.6 L-3.2,7 L-5.8,5.6 L-8.7,6.6 L-11.3,2.1 L-9,0 L-11.3,-2.1 L-8.7,-6.6 L-5.8,-5.6 L-3.2,-7 Z M0,-3 A3,3 0 1 0 0.01,-3 Z" fill="#fff" fill-rule="evenodd"/>
  </g>
  <!-- wallboard -->
  <rect x="176.9" y="1068.5" width="16.1" height="20.2" fill="#fff"/>
  <rect x="176.9" y="1090.7" width="16.1" height="12.5" fill="#fff"/>
  <rect x="195" y="1068.5" width="16.2" height="12.7" fill="#fff"/>
  <rect x="195" y="1083.2" width="16.2" height="20" fill="#fff"/>
</svg>
<!-- header -->
<div class="t" style="left:311px;top:254.1px;font-size:40px;font-weight:bold;color:#000">System Users</div>
<svg style="left:0;top:0" width="2880" height="400">
  <circle cx="691" cy="262" r="8.5" stroke="#000" stroke-width="3" fill="none"/>
  <path d="M697,268 L706.5,277.5" stroke="#000" stroke-width="3.6"/>
  <path d="M924,259.5 V280 M914,269.8 H934" stroke="#000" stroke-width="5.6"/>
</svg>
<div class="t" style="left:722px;top:256.8px;font-size:22px;color:#000">Search</div>
<div class="t" style="left:945px;top:256.8px;font-size:22px;color:#000">New</div>
<!-- table -->
<div class="a" style="left:302px;top:364px;width:2494px;height:1372px;border:2px solid #a4a6aa"></div>
<div class="a" style="left:304px;top:434px;width:2494px;height:2px;background:#a4a6aa"></div>
<div class="a" style="left:304px;top:1636px;width:2494px;height:30px;background:#fcfcfc"></div>
<div class="a" style="left:304px;top:1666px;width:2494px;height:2px;background:#a4a6aa"></div>
<svg style="left:0;top:0" width="2880" height="1800">
  <path d="M324.3,1642 V1660 L315,1651 Z" fill="#8a8a8a"/>
  <rect x="340" y="1642" width="2013" height="18" rx="9" fill="#8c8c8c"/>
  <path d="M2778,1642 V1660 L2787.5,1651 Z" fill="#8a8a8a"/>
  <path d="M2740.2,1692.2 V1711.7 L2730,1702 Z" fill="#000"/>
  <path d="M2771.8,1692.2 V1711.7 L2782,1702 Z" fill="#000"/>
</svg>
<div class="th" style="left:304px;top:366px;width:280px">Username</div>
<div class="th" style="left:604px;top:366px;width:280px">First Name</div>
<div class="th" style="left:904px;top:366px;width:280px">Last Name</div>
<div class="th" style="left:1204px;top:366px;width:280px">Phone</div>
<div class="th" style="left:1504px;top:366px;width:280px">Email</div>
<div class="th" style="left:1804px;top:366px;width:180px">Extension</div>
<div class="th" style="left:2004px;top:366px;width:280px">Role</div>
<div class="th" style="left:2304px;top:366px;width:180px">Is Active</div>
<div class="th" style="left:2504px;top:366px;width:276px">Created On</div>
<div class="td" style="left:304px;top:436px;width:280px">Mia</div>
<div class="td" style="left:604px;top:436px;width:280px">Winnie</div>
<div class="td" style="left:904px;top:436px;width:280px">Ndonga</div>
<div class="td" style="left:1204px;top:436px;width:280px">254790725166</div>
<div class="td" style="left:1504px;top:436px;width:280px">ndongawinnie44@gmail.com</div>
<div class="td" style="left:1804px;top:436px;width:180px">249</div>
<div class="td" style="left:2004px;top:436px;width:280px">Counsellor</div>
<div class="td" style="left:2304px;top:436px;width:180px">Yes</div>
<div class="td" style="left:2504px;top:436px;width:276px">16 Sep 2025 5:14</div>
<div class="td" style="left:304px;top:496px;width:280px">Keli</div>
<div class="td" style="left:604px;top:496px;width:280px">whitney</div>
<div class="td" style="left:904px;top:496px;width:280px">ochieng</div>
<div class="td" style="left:1204px;top:496px;width:280px">254769892303</div>
<div class="td" style="left:1504px;top:496px;width:280px">whitneyochieng1@gmail.com</div>
<div class="td" style="left:1804px;top:496px;width:180px">248</div>
<div class="td" style="left:2004px;top:496px;width:280px">Counsellor</div>
<div class="td" style="left:2304px;top:496px;width:180px">Yes</div>
<div class="td" style="left:2504px;top:496px;width:276px">16 Sep 2025 4:57</div>
<div class="td" style="left:304px;top:556px;width:280px">Asha</div>
<div class="td" style="left:604px;top:556px;width:280px">Karen</div>
<div class="td" style="left:904px;top:556px;width:280px">Maiyo</div>
<div class="td" style="left:1204px;top:556px;width:280px">254701723833</div>
<div class="td" style="left:1504px;top:556px;width:280px">karencherop2002@gmail.com</div>
<div class="td" style="left:1804px;top:556px;width:180px">247</div>
<div class="td" style="left:2004px;top:556px;width:280px">Counsellor</div>
<div class="td" style="left:2304px;top:556px;width:180px">Yes</div>
<div class="td" style="left:2504px;top:556px;width:276px">16 Sep 2025 4:56</div>
<div class="td" style="left:304px;top:616px;width:280px">Natalie</div>
<div class="td" style="left:604px;top:616px;width:280px">Alice</div>
<div class="td" style="left:904px;top:616px;width:280px">Mudeizi</div>
<div class="td" style="left:1204px;top:616px;width:280px">254796987637</div>
<div class="td" style="left:1504px;top:616px;width:280px">mudeiziofficial@gmail.com</div>
<div class="td" style="left:1804px;top:616px;width:180px">246</div>
<div class="td" style="left:2004px;top:616px;width:280px">Counsellor</div>
<div class="td" style="left:2304px;top:616px;width:180px">Yes</div>
<div class="td" style="left:2504px;top:616px;width:276px">16 Sep 2025 4:55</div>
<div class="td" style="left:304px;top:676px;width:280px">Tiffany</div>
<div class="td" style="left:604px;top:676px;width:280px">Samantha</div>
<div class="td" style="left:904px;top:676px;width:280px">Muhanji</div>
<div class="td" style="left:1204px;top:676px;width:280px">254711300537</div>
<div class="td" style="left:1504px;top:676px;width:280px">sammuhanji2014@gmail.com</div>
<div class="td" style="left:1804px;top:676px;width:180px">245</div>
<div class="td" style="left:2004px;top:676px;width:280px">Counsellor</div>
<div class="td" style="left:2304px;top:676px;width:180px">Yes</div>
<div class="td" style="left:2504px;top:676px;width:276px">16 Sep 2025 4:54</div>
<div class="td" style="left:304px;top:736px;width:280px">Precious</div>
<div class="td" style="left:604px;top:736px;width:280px">Nancy</div>
<div class="td" style="left:904px;top:736px;width:280px">wanjau</div>
<div class="td" style="left:1204px;top:736px;width:280px">254792159595</div>
<div class="td" style="left:1504px;top:736px;width:280px">nancywanjau71@gmail,com</div>
<div class="td" style="left:1804px;top:736px;width:180px">244</div>
<div class="td" style="left:2004px;top:736px;width:280px">Counsellor</div>
<div class="td" style="left:2304px;top:736px;width:180px">Yes</div>
<div class="td" style="left:2504px;top:736px;width:276px">16 Sep 2025 4:53</div>
<div class="td" style="left:304px;top:796px;width:280px">Ely</div>
<div class="td" style="left:604px;top:796px;width:280px">Charles</div>
<div class="td" style="left:904px;top:796px;width:280px">Ochieng</div>
<div class="td" style="left:1204px;top:796px;width:280px">254111815026</div>
<div class="td" style="left:1504px;top:796px;width:280px">bishopcharles122@gmail.com</div>
<div class="td" style="left:1804px;top:796px;width:180px">243</div>
<div class="td" style="left:2004px;top:796px;width:280px">Counsellor</div>
<div class="td" style="left:2304px;top:796px;width:180px">Yes</div>
<div class="td" style="left:2504px;top:796px;width:276px">16 Sep 2025 4:52</div>
<div class="td" style="left:304px;top:856px;width:280px">Heri</div>
<div class="td" style="left:604px;top:856px;width:280px">Gladwel</div>
<div class="td" style="left:904px;top:856px;width:280px">Mumbi</div>
<div class="td" style="left:1204px;top:856px;width:280px">254114127087</div>
<div class="td" style="left:1504px;top:856px;width:280px">gladwellucymburu@gmail.com</div>
<div class="td" style="left:1804px;top:856px;width:180px">242</div>
<div class="td" style="left:2004px;top:856px;width:280px">Counsellor</div>
<div class="td" style="left:2304px;top:856px;width:180px">Yes</div>
<div class="td" style="left:2504px;top:856px;width:276px">16 Sep 2025 4:51</div>
<div class="td" style="left:304px;top:916px;width:280px">Rio</div>
<div class="td" style="left:604px;top:916px;width:280px">Carolyne</div>
<div class="td" style="left:904px;top:916px;width:280px">Mburu</div>
<div class="td" style="left:1204px;top:916px;width:280px">254718780069</div>
<div class="td" style="left:1504px;top:916px;width:280px">mburucarolyne100@gmail.com</div>
<div class="td" style="left:1804px;top:916px;width:180px">241</div>
<div class="td" style="left:2004px;top:916px;width:280px">Counsellor</div>
<div class="td" style="left:2304px;top:916px;width:180px">Yes</div>
<div class="td" style="left:2504px;top:916px;width:276px">16 Sep 2025 4:46</div>
<div class="td" style="left:304px;top:976px;width:280px">Sandy</div>
<div class="td" style="left:604px;top:976px;width:280px">Bridget</div>
<div class="td" style="left:904px;top:976px;width:280px">Jepngetich</div>
<div class="td" style="left:1204px;top:976px;width:280px">254769359351</div>
<div class="td" style="left:1504px;top:976px;width:280px">bridgetjepngetich08@gmail.com</div>
<div class="td" style="left:1804px;top:976px;width:180px">240</div>
<div class="td" style="left:2004px;top:976px;width:280px">Counsellor</div>
<div class="td" style="left:2304px;top:976px;width:180px">Yes</div>
<div class="td" style="left:2504px;top:976px;width:276px">5 Sep 2025 3:53</div>
<div class="td" style="left:304px;top:1036px;width:280px">Lyn</div>
<div class="td" style="left:604px;top:1036px;width:280px">Laureen</div>
<div class="td" style="left:904px;top:1036px;width:280px">Jerono</div>
<div class="td" style="left:1204px;top:1036px;width:280px">254748024104</div>
<div class="td" style="left:1504px;top:1036px;width:280px">laureenjerono@gmail.com</div>
<div class="td" style="left:1804px;top:1036px;width:180px">239</div>
<div class="td" style="left:2004px;top:1036px;width:280px">Counsellor</div>
<div class="td" style="left:2304px;top:1036px;width:180px">Yes</div>
<div class="td" style="left:2504px;top:1036px;width:276px">5 Sep 2025 3:52</div>
<div class="td" style="left:304px;top:1096px;width:280px">Leila</div>
<div class="td" style="left:604px;top:1096px;width:280px">Valary</div>
<div class="td" style="left:904px;top:1096px;width:280px">Jepchumba</div>
<div class="td" style="left:1204px;top:1096px;width:280px">254798605195</div>
<div class="td" style="left:1504px;top:1096px;width:280px">chepchumbavalery@gmail.com</div>
<div class="td" style="left:1804px;top:1096px;width:180px">238</div>
<div class="td" style="left:2004px;top:1096px;width:280px">Counsellor</div>
<div class="td" style="left:2304px;top:1096px;width:180px">Yes</div>
<div class="td" style="left:2504px;top:1096px;width:276px">5 Sep 2025 3:46</div>
<div class="td" style="left:304px;top:1156px;width:280px">June</div>
<div class="td" style="left:604px;top:1156px;width:280px">Sheila</div>
<div class="td" style="left:904px;top:1156px;width:280px">Githegi</div>
<div class="td" style="left:1204px;top:1156px;width:280px">254718641833</div>
<div class="td" style="left:1504px;top:1156px;width:280px">githegiwangui@gmail.com</div>
<div class="td" style="left:1804px;top:1156px;width:180px">237</div>
<div class="td" style="left:2004px;top:1156px;width:280px">Counsellor</div>
<div class="td" style="left:2304px;top:1156px;width:180px">Yes</div>
<div class="td" style="left:2504px;top:1156px;width:276px">22 Jul 2025 4:56</div>
<div class="td" style="left:304px;top:1216px;width:280px">Sylvia</div>
<div class="td" style="left:604px;top:1216px;width:280px">Marie-France</div>
<div class="td" style="left:904px;top:1216px;width:280px">Togogo</div>
<div class="td" style="left:1204px;top:1216px;width:280px">254799715812</div>
<div class="td" style="left:1504px;top:1216px;width:280px">mariefrancetogogo32@gmail.com</div>
<div class="td" style="left:1804px;top:1216px;width:180px">115</div>
<div class="td" style="left:2004px;top:1216px;width:280px">Counsellor</div>
<div class="td" style="left:2304px;top:1216px;width:180px">Yes</div>
<div class="td" style="left:2504px;top:1216px;width:276px">13 Jul 2025 10:43</div>
<div class="td" style="left:304px;top:1276px;width:280px">Elana</div>
<div class="td" style="left:604px;top:1276px;width:280px">Danah</div>
<div class="td" style="left:904px;top:1276px;width:280px">Mumbo</div>
<div class="td" style="left:1204px;top:1276px;width:280px">254110047942</div>
<div class="td" style="left:1504px;top:1276px;width:280px">danahmumbo@gmail.com</div>
<div class="td" style="left:1804px;top:1276px;width:180px">114</div>
<div class="td" style="left:2004px;top:1276px;width:280px">Counsellor</div>
<div class="td" style="left:2304px;top:1276px;width:180px">Yes</div>
<div class="td" style="left:2504px;top:1276px;width:276px">13 Jul 2025 10:41</div>
<div class="td" style="left:304px;top:1336px;width:280px">Nina</div>
<div class="td" style="left:604px;top:1336px;width:280px">Ann</div>
<div class="td" style="left:904px;top:1336px;width:280px">Kamau</div>
<div class="td" style="left:1204px;top:1336px;width:280px">254794289975</div>
<div class="td" style="left:1504px;top:1336px;width:280px">njeannkamau@gmail.com</div>
<div class="td" style="left:1804px;top:1336px;width:180px">112</div>
<div class="td" style="left:2004px;top:1336px;width:280px">Counsellor</div>
<div class="td" style="left:2304px;top:1336px;width:180px">Yes</div>
<div class="td" style="left:2504px;top:1336px;width:276px">13 Jul 2025 10:30</div>
<div class="td" style="left:304px;top:1396px;width:280px">Adda</div>
<div class="td" style="left:604px;top:1396px;width:280px">Alphoncen</div>
<div class="td" style="left:904px;top:1396px;width:280px">Apondi</div>
<div class="td" style="left:1204px;top:1396px;width:280px">254707757861</div>
<div class="td" style="left:1504px;top:1396px;width:280px">alphoncen.apondi@gmail.com</div>
<div class="td" style="left:1804px;top:1396px;width:180px">111</div>
<div class="td" style="left:2004px;top:1396px;width:280px">Counsellor</div>
<div class="td" style="left:2304px;top:1396px;width:180px">Yes</div>
<div class="td" style="left:2504px;top:1396px;width:276px">13 Jul 2025 10:27</div>
<div class="td" style="left:304px;top:1456px;width:280px">Duncan</div>
<div class="td" style="left:604px;top:1456px;width:280px">Polycap</div>
<div class="td" style="left:904px;top:1456px;width:280px">Mwongela</div>
<div class="td" style="left:1204px;top:1456px;width:280px">254794869565</div>
<div class="td" style="left:1504px;top:1456px;width:280px">polycapmwongeela9@gmail.com</div>
<div class="td" style="left:1804px;top:1456px;width:180px">109</div>
<div class="td" style="left:2004px;top:1456px;width:280px">Counsellor</div>
<div class="td" style="left:2304px;top:1456px;width:180px">Yes</div>
<div class="td" style="left:2504px;top:1456px;width:276px">9 Jun 2025 8:17</div>
<div class="td" style="left:304px;top:1516px;width:280px">Shantel</div>
<div class="td" style="left:604px;top:1516px;width:280px">Deborah</div>
<div class="td" style="left:904px;top:1516px;width:280px">Ruth</div>
<div class="td" style="left:1204px;top:1516px;width:280px">254768252786</div>
<div class="td" style="left:1504px;top:1516px;width:280px">Moswetaruth@gmail.com</div>
<div class="td" style="left:1804px;top:1516px;width:180px">108</div>
<div class="td" style="left:2004px;top:1516px;width:280px">Counsellor</div>
<div class="td" style="left:2304px;top:1516px;width:180px">Yes</div>
<div class="td" style="left:2504px;top:1516px;width:276px">4 Jun 2025 8:24</div>
<div class="td" style="left:304px;top:1576px;width:280px">Sana</div>
<div class="td" style="left:604px;top:1576px;width:280px">Natalia</div>
<div class="td" style="left:904px;top:1576px;width:280px">Juma</div>
<div class="td" style="left:1204px;top:1576px;width:280px">254115577882</div>
<div class="td" style="left:1504px;top:1576px;width:280px">Nataliajuma24@gmail.com</div>
<div class="td" style="left:1804px;top:1576px;width:180px">107</div>
<div class="td" style="left:2004px;top:1576px;width:280px">Counsellor</div>
<div class="td" style="left:2304px;top:1576px;width:180px">Yes</div>
<div class="td" style="left:2504px;top:1576px;width:276px">4 Jun 2025 8:21</div>
<div class="t" style="left:2497px;top:1693px;font-size:26px;color:#000">1</div>
<div class="t" style="left:2531px;top:1693px;font-size:26px;color:#000">-</div>
<div class="t" style="left:2560px;top:1693px;font-size:26px;color:#000">20</div>
<div class="t" style="left:2609px;top:1693px;font-size:26px;color:#000">of</div>
<div class="t" style="left:2651px;top:1693px;font-size:26px;color:#000">150</div>

</body></html>
